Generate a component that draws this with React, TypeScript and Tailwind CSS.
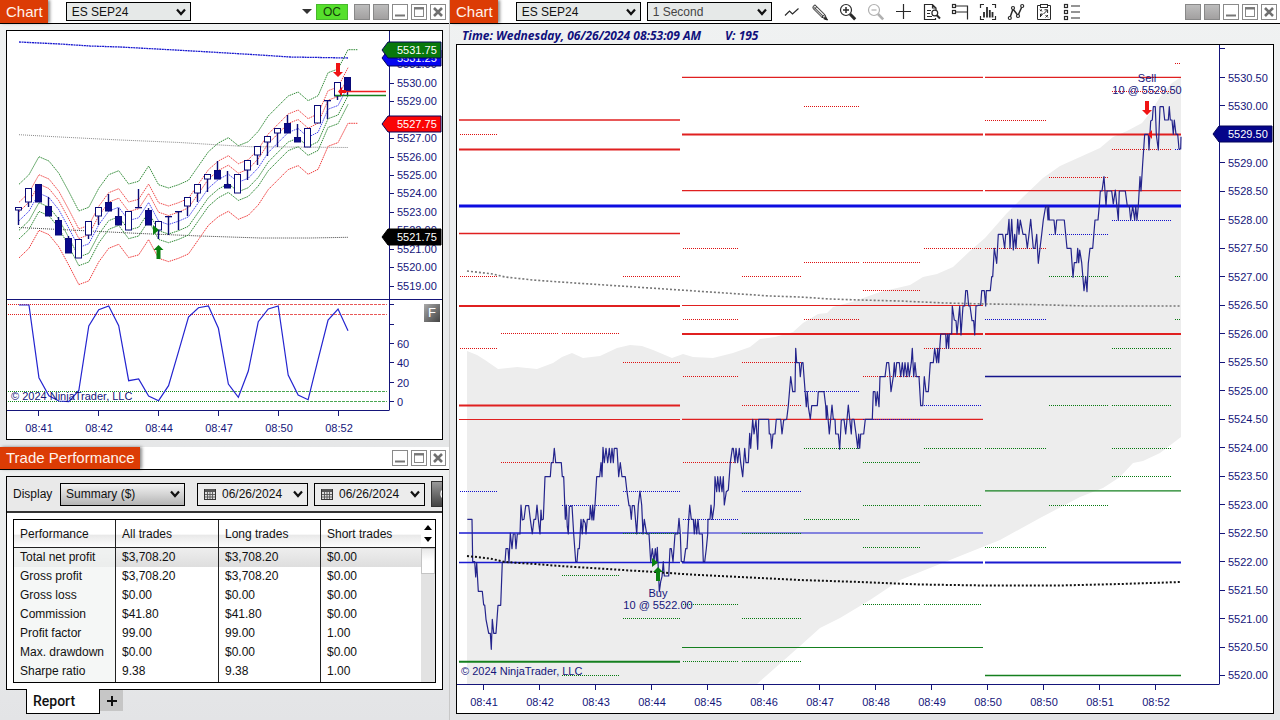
import React from "react";

const NAVY = "#15157a";
const RED = "#e02020";
const GREEN = "#15801f";
const BLUE = "#1a1ad0";

type Pair = [number, number];
const join = (p: Pair[]) => p.map((q) => q.join(",")).join(" ");

/* ---------- small parts ---------- */

function Chevron({ className = "" }: { className?: string }) {
  return (
    <svg viewBox="0 0 10 8" className={"pointer-events-none h-2 w-2.5 " + className} fill="none">
      <path d="M1 1.5 L5 6 L9 1.5" stroke="#111" strokeWidth="2.2" />
    </svg>
  );
}

function Picker({ label, id, value, dim, tone }: { label: string; id?: string; value: string; dim?: boolean; tone?: "metal" }) {
  return (
    <div className="relative flex w-[125px] shrink-0 items-center">
      <select
        id={id}
        aria-label={label}
        className={
          "w-full appearance-none rounded-none border border-black pl-[5px] text-[12px] leading-4 outline-none " +
          (tone === "metal" ? "h-[23px] bg-linear-to-b from-[#f2f2f2] via-[#d4d4d4] to-[#b4b4b4] " : "h-[19px] bg-[#e6e9e8] ") +
          (dim ? "text-[#444]" : "text-[#111]")
        }
      >
        <option>{value}</option>
      </select>
      <Chevron className="absolute right-[5px]" />
    </div>
  );
}

function DatePick({ label }: { label: string }) {
  return (
    <div className="relative flex w-[111px] shrink-0 items-center">
      <svg viewBox="0 0 12 12" className="pointer-events-none absolute left-[7px] h-3 w-3">
        <rect x="0.5" y="1.5" width="11" height="10" fill="#ddd" stroke="#333" />
        <rect x="1" y="1" width="10" height="3" fill="#555" />
        <path d="M1 6.5H11M1 9H11M3.5 4V11M6 4V11M8.5 4V11" stroke="#555" strokeWidth="0.9" />
      </svg>
      <select
        aria-label={label}
        className="h-[23px] w-full appearance-none rounded-none border border-black bg-[#ececec] pl-6 text-[12px] leading-4 text-[#111] outline-none"
      >
        <option>06/26/2024</option>
      </select>
      <Chevron className="absolute right-[5px]" />
    </div>
  );
}

function WindowButtons({ links }: { links?: boolean }) {
  const box = "h-4 w-4 border border-[#8a8a8a] bg-white";
  const metal = "h-4 w-4 border border-[#888] bg-linear-to-b from-[#bdbdbd] to-[#a2a0a0]";
  return (
    <div className="flex shrink-0 items-center gap-[3px] pr-[3px]">
      {links && <button aria-label="Link instrument" className={metal} />}
      {links && <button aria-label="Link interval" className={metal} />}
      <button aria-label="Minimize" className={box}>
        <svg viewBox="0 0 14 14" className="block h-3.5 w-3.5"><path d="M2 10.5H12" stroke="#777" strokeWidth="2" /></svg>
      </button>
      <button aria-label="Maximize" className={box}>
        <svg viewBox="0 0 14 14" className="block h-3.5 w-3.5" fill="none"><rect x="2.5" y="2.5" width="9" height="9" stroke="#888" /><path d="M2 3.5H12" stroke="#777" strokeWidth="2" /></svg>
      </button>
      <button aria-label="Close" className={box}>
        <svg viewBox="0 0 14 14" className="block h-3.5 w-3.5"><path d="M3 3L11 11M11 3L3 11" stroke="#707070" strokeWidth="2.6" /></svg>
      </button>
    </div>
  );
}

function TabTitle({ children }: { children: React.ReactNode }) {
  return (
    <h2 className="flex shrink-0 items-center self-stretch bg-[#dc3c05] pr-[5px] pl-1.5 text-[15px] leading-5 text-[#fff3ec] shadow-[2px_0_3px_rgba(0,0,0,0.45)]">
      {children}
    </h2>
  );
}

const tools: { name: string; art: React.ReactNode; faded?: boolean }[] = [
  { name: "Line", art: <path d="M2 12.5L6.5 8L9.5 11L15.5 5.5" /> },
  {
    name: "Draw",
    art: (
      <g>
        <path d="M2 3.5L4 1.8L13.8 11.5L16 16.5L10.8 14.2L2 5.5Z" fill="#ddd" strokeWidth="1" />
        <path d="M3.2 4.6L12 13.2M3.5 6L6 3.6M10.8 14.2L13.8 11.5" strokeWidth="0.9" />
        <path d="M14 14.3L16.6 17L13.4 15.9Z" fill="#222" />
      </g>
    ),
  },
  {
    name: "Zoom in",
    art: (
      <g>
        <circle cx="7" cy="7" r="5.5" />
        <path d="M4 7H10M7 4V10" strokeWidth="1.5" />
        <path d="M11 11L16.2 16.4" strokeWidth="3" />
      </g>
    ),
  },
  {
    name: "Zoom out",
    faded: true,
    art: (
      <g>
        <circle cx="7" cy="7" r="5.5" />
        <path d="M4.5 7H9.5" />
        <path d="M11 11L16.2 16.4" strokeWidth="2.6" />
      </g>
    ),
  },
  { name: "Crosshair", art: <path d="M8.5 1V16M1 8.5H16" strokeWidth="1.2" /> },
  {
    name: "Data box",
    art: (
      <g>
        <path d="M13 7V5L9.5 1.5H1.5V16.5H12.5V15M9.5 1.5V5H13M4 7.5H8M4 10.5H7M4 13.5H9" />
        <circle cx="11.8" cy="10" r="2.9" fill="#fff" />
        <path d="M13.8 12.2L17 15.5" strokeWidth="2" />
      </g>
    ),
  },
  {
    name: "Chart trader",
    art: (
      <g>
        <rect x="1.5" y="1.5" width="3" height="3" />
        <rect x="1.5" y="7.5" width="3" height="3" />
        <path d="M4.5 3H16.5V16.5M4.5 9H16.5" />
      </g>
    ),
  },
  {
    name: "Properties",
    art: (
      <g>
        <path d="M1.5 5V1.5H5M13 1.5H16.5V5M1.5 13V16.5H5M13 16.5H16.5V13" />
        <path d="M5 9V14.5M8 4V14.5M10.8 7V14.5M13.5 9V14.5" strokeWidth="1.8" />
      </g>
    ),
  },
  {
    name: "Indicators",
    art: (
      <g>
        <path d="M3 14.5L6 6L11 12.5L15 3.5" strokeWidth="1.5" />
        <circle cx="2.8" cy="15" r="1.5" fill="#fff" />
        <circle cx="6" cy="5" r="1.5" fill="#fff" />
        <circle cx="11" cy="13" r="1.5" fill="#fff" />
        <circle cx="15.2" cy="3" r="1.5" fill="#fff" />
      </g>
    ),
  },
  {
    name: "Strategies",
    art: (
      <g strokeWidth="1">
        <path d="M5 2.5H2.5V16.5H15.5V2.5H13" />
        <rect x="5.5" y="1.5" width="7" height="3" />
        <path d="M5 8L7 6.5M5 6.5L7 8.5M8.5 11L12.5 7M9.5 6.8H12.6V10M5.5 14V11H7.5L6 13M10.5 12L13 14.5M13 12L10.5 14.5" />
      </g>
    ),
  },
  {
    name: "List",
    art: (
      <g>
        <rect x="1.5" y="1.5" width="3" height="3" />
        <rect x="1.5" y="7.5" width="3" height="3" />
        <rect x="1.5" y="13.5" width="3" height="3" />
        <path d="M8 3H17M8 9H17M8 15H17" />
      </g>
    ),
  },
];

function Flag({ x, y, text, fill, edge = "#05055a" }: { x: number; y: number; text: string; fill: string; edge?: string }) {
  return (
    <g>
      <path d={`M${x} ${y} L${x + 6} ${y - 8} H${x + 59} V${y + 8} H${x + 6} Z`} fill={fill} stroke={edge} />
      <text x={x + 15} y={y + 4} fill="#fff">{text}</text>
    </g>
  );
}

const arrow = (x: number, tip: number, dir: 1 | -1) =>
  `M${x} ${tip} L${x - 5} ${tip - 5 * dir} H${x - 2} V${tip - 14 * dir} H${x + 2} V${tip - 5 * dir} H${x + 5} Z`;

/* ---------- left chart ---------- */

const barX = (i: number) => 19 + i * 9.97;
const envelope = [
  184.3, 174.7, 156.7, 161, 173.3, 191.7, 211, 207.3, 188.3, 174.7, 170.7, 184, 181.3, 166, 184.7, 188, 184.7, 180.3, 166,
  151.7, 143, 137.7, 145.7, 141.7, 131.3, 116, 106, 96, 92, 100.7, 95.7, 72.7, 69, 49.7,
];
const bands: { shift: number; color: string; extend?: boolean }[] = [
  { shift: 0, color: "#2f8a35", extend: true },
  { shift: 18, color: "#f04a4a" },
  { shift: 27.5, color: "#f04a4a" },
  { shift: 36.5, color: "#4a4af0" },
  { shift: 46, color: "#2f8a35" },
  { shift: 54.7, color: "#2f8a35" },
  { shift: 73.6, color: "#f03a3a", extend: true },
];
// [wick top, body top, body bottom, wick bottom, filled]
const candles: [number, number, number, number, 0 | 1][] = [
  [207, 207, 210, 225, 0], [188, 188, 202, 207, 0], [184, 184, 202, 202, 1], [197, 206, 216, 216, 1],
  [217, 220, 235, 235, 1], [236, 238, 253, 253, 1], [239, 239, 258, 258, 0], [221, 221, 235, 239, 0],
  [207, 207, 216, 225, 0], [194, 202, 211, 211, 1], [208, 216, 225, 225, 1], [211, 211, 230, 230, 0],
  [189, 207, 207, 207, 0], [208, 210, 225, 225, 1], [221, 221, 230, 239, 0], [216, 216, 216, 235, 0],
  [211, 211, 211, 230, 0], [197, 197, 206, 216, 0], [184, 184, 193, 202, 0], [174, 174, 179, 192, 0],
  [161, 170, 179, 179, 1], [171, 184, 188, 188, 1], [174, 174, 193, 193, 0], [160, 160, 170, 180, 0],
  [146, 146, 155, 165, 0], [136, 136, 142, 156, 0], [128, 128, 133, 147, 0], [115, 123, 133, 133, 1],
  [124, 137, 142, 142, 1], [128, 128, 147, 147, 0], [105, 105, 123, 123, 0], [100, 100, 100, 119, 0],
  [82, 82, 96, 100, 0], [77, 77, 91, 95, 1],
];
const stochastic = [
  305, 305, 377.7, 395.7, 401, 401.7, 390.5, 326, 309.7, 306, 325.7, 380.7, 379, 396, 400.7, 385.7, 351.7, 317, 307.7, 306,
  328.3, 384, 397.3, 371, 321.7, 309, 306, 375, 395, 399.7, 359.3, 320, 309, 330.7,
];

function TickChart() {
  return (
    <svg viewBox="7 31 435 408" className="block h-auto w-full" fontSize="11" role="img" aria-label="ES SEP24 range chart">
      <g fill="none">
        <polyline points="19,42 60,44 90,46 120,47 175,50 210,52 260,55 290,57 320,57.5 348,58" stroke={BLUE} strokeWidth="1.3" strokeDasharray="2 0.6" />
        <polyline points="19,134.7 60,137 120,140 180,142.5 220,145 250,146.7 348,147.5" stroke="#8a8a8a" strokeDasharray="1 1" />
        <polyline points="19,227.5 80,230.5 140,233.5 200,236 260,238 310,238 348,237.3" stroke="#444" strokeDasharray="1 1" />
        {bands.map((b) => (
          <polyline
            key={b.shift}
            points={
              join(envelope.map((v, i): Pair => [barX(i), v + b.shift])) + (b.extend ? ` 358,${envelope[33] + b.shift}` : "")
            }
            stroke={b.color}
            strokeDasharray="1.5 0.8"
          />
        ))}
      </g>
      <g stroke="#0a0a78">
        {candles.map(([wt, bt, bb, wb, filled], i) => {
          const x = Math.round(barX(i)) - 0.5;
          return (
            <g key={i}>
              <path d={`M${x} ${wt}V${bt}M${x} ${bb}V${wb}`} strokeWidth="1.4" />
              <rect x={x - 3} y={bt + 0.5} width="6" height={Math.max(bb - bt - 0.5, 0.3)} fill={filled ? "#0a0a8c" : "#fff"} />
            </g>
          );
        })}
      </g>
      <path d="M345 91.5H386" stroke="#f02020" strokeWidth="1.3" />
      <path d="M335 95.5H386" stroke={GREEN} strokeWidth="1.3" />
      <path d={arrow(338, 77, 1)} fill="#f01414" />
      <path d="M338 91.5L342 87V96Z M342 90H346V93H342Z" fill="#f01414" />
      <path d={arrow(158.5, 245, -1)} fill="#0a800f" />
      <path d="M159 230L153 225V235Z" fill="#0a800f" />

      <g fill="none">
        {[304.5, 314.5, 391.5, 401.5].map((y) => (
          <g key={y} stroke={y < 350 ? "#e02020" : "#0f8a1a"}>
            <path d={`M8 ${y}H218`} strokeDasharray="1 1" />
            <path d={`M218 ${y}H387`} strokeOpacity="0.75" strokeDasharray="3 1" />
          </g>
        ))}
        <polyline points={join(stochastic.map((v, i): Pair => [barX(i), v]))} stroke="#2424d0" strokeWidth="1.2" />
        <path d="M7 299.5H442M389.5 31V410.5M7 410.5H389" stroke={NAVY} />
        <path
          d={"M389 304.5h5M389 324.5h5" + [343.5, 362.5, 382.5, 401.5].map((y) => `M389 ${y}h5`).join("")}
          stroke={NAVY}
        />
      </g>
      <g fill={NAVY}>
        {[5531, 5530, 5529, 5527, 5526, 5525, 5524, 5523, 5522, 5521, 5520, 5519].map((p) => {
          const y = 82.7 + (5530 - p) * 18.45;
          return (
            <g key={p}>
              <path d={`M389 ${Math.round(y)}.5h5`} stroke={NAVY} />
              <text x="397" y={y + 4}>{p}.00</text>
            </g>
          );
        })}
        {[60, 40, 20, 0].map((v, i) => (
          <text key={v} x="397" y={348 + i * 19.3}>{v}</text>
        ))}
        {["08:41", "08:42", "08:44", "08:47", "08:50", "08:52"].map((t, i) => (
          <g key={t}>
            <path d={`M${38.5 + i * 60} 411v5`} stroke={NAVY} />
            <text x={39 + i * 60} y="432" textAnchor="middle">{t}</text>
          </g>
        ))}
        <text x="11" y="400">© 2024 NinjaTrader, LLC</text>
      </g>
      <Flag x={382} y={58} text="5531.25" fill="#0505f0" />
      <Flag x={382} y={50} text="5531.75" fill="#08780c" />
      <Flag x={382} y={124} text="5527.75" fill="#fa0505" />
      <Flag x={382} y={237} text="5521.75" fill="#000" edge="#000" />
    </svg>
  );
}

/* ---------- right chart ---------- */

const third = (ox: number, oy: number, src: string) =>
  src
    .split(" ")
    .map((s) => s.split(",").map(Number))
    .map(([x, y]) => `${(ox + x / 3).toFixed(1)},${(oy + y / 3).toFixed(1)}`)
    .join(" ");

const priceLine = [
  third(450, 430, "52,268 66,268 68,395 74,395 77,441 80,398 85,484 97,484 101,525 104,525 108,568 116,610 121,610 124,658 127,568 131,610 138,610 144,526 152,526 157,397 165,397 168,356 174,356 177,398 181,309 186,356 190,312 195,312 198,356 202,312 210,312 213,225 217,270 222,268 227,227 236,227 241,268 247,312 252,268 257,268 261,225 265,268 270,312 273,240 275,270 280,268 285,140 301,140 304,98 309,98 313,55 317,98 334,98 337,140 341,140 346,268 349,225 352,290 355,312 358,230 366,227 371,312 377,395 381,395 384,356 388,356 393,268 397,312 400,268 406,280 408,312 412,268 419,268 421,227 426,270 428,225 431,270 435,225 440,140 449,140 453,98 456,140 459,52 463,98 468,55 473,98 478,55 482,98 486,55 490,98 493,55 501,55 506,140 511,98 516,140 526,140 531,185 537,227 540,227 544,268 547,227 553,227 560,312 565,225 570,183 575,225 579,312 583,268 590,312 597,312 602,395 607,356 612,395 616,356 620,398 622,352 626,440 628,485 632,455 636,440 640,395 643,438 656,438 660,356 664,356 669,395 675,312 683,312 687,265 691,312 694,395 702,395 707,356 711,356 716,268 719,225 724,268 730,268 733,312 736,268 740,312 744,268 748,312 757,312 760,395 764,395 769,356 773,312 774,268 780,268 783,225 787,268 793,225 795,140 800,185 803,140 808,185 811,140 816,185 820,140 823,225 829,185 835,180 841,98 847,55 850,55 855,98 858,55 863,98 868,55 872,98 878,140 884,55 888,98 895,98 899,10"),
  third(680, 330, "212,355 215,310 218,268 222,312 228,270 233,358 236,268 266,268 268,312 272,312 275,355 279,312 285,312 289,268 302,268 306,312 311,270 320,268 325,227 332,140 338,185 345,185 347,55 350,98 358,98 361,140 365,98 369,98 372,140 379,230 382,185 385,230 391,268 395,227 412,227 415,185 432,185 437,227 439,268 441,227 448,312 456,225 460,268 465,268 467,312 475,312 479,358 484,270 492,268 497,312 505,225 509,268 514,312 516,268 522,268 528,312 533,355 536,312 539,355 542,312 551,312 556,268 577,268 580,185 585,185 588,227 592,185 597,230 600,140 615,140 620,98 626,98 630,140 633,185 640,140 643,98 646,140 650,98 658,98 662,140 667,98 671,140 675,98 680,140 684,98 688,140 694,98 697,55 701,140 705,98 709,140 717,140 722,227 728,227 733,140 738,185 745,185 751,98 760,98 764,55 770,98 773,55 776,98 782,12 797,12 799,55 803,12 806,55"),
  third(860, 250, "268,252 275,252 277,168 283,210 288,212 291,252 295,212 299,168 303,255 309,168 314,168 317,122 322,122 326,168 330,168 336,212 341,212 344,255 348,168 362,165 365,122 373,122 377,168 379,122 391,122 395,80 398,80"),
  third(860, 0, "403,745 410,790 415,703 428,703 434,745 437,703 443,703 447,658 450,745 455,658 460,750 464,703 468,745 473,658 477,703 481,660 489,703 497,703 502,745 507,703 512,658 520,745 525,745 530,703 535,790 540,745 545,703 550,660 557,618 561,618 564,660 566,618 568,660 582,660 586,703 590,660 613,660 621,745 633,745 636,790 639,832 643,788 650,788 653,745 656,788 659,750 665,788 672,872 677,830 681,875 685,790 690,745 698,745 705,660 714,660 718,618 721,573 726,573 732,530 738,618 741,573 755,573 760,612 766,570 770,612 775,660 778,573 796,573 802,618 808,618 812,660 818,618 824,660 827,618 831,660 835,618 840,530 843,573 848,490 854,403 865,403 867,450 872,363 877,360 880,320 886,320 889,403 895,450 900,320 910,320 914,360 925,360 928,320 931,360 936,360 940,403 943,360 948,403 953,403 957,447 962,447 963,410"),
].join(" ");

const cloud =
  "467,351 477,355 485,360 498,369 517,367 537,369 553,363 562,357 572,353 583,358 600,356 617,348 630,345 642,346 653,350 672,358 683,354 693,357 713,358 733,353 750,347 760,339 775,337 793,332 803,323 818,314 827,313 833,307 855,301 880,292 910,285 923,277 937,274 953,267 970,251 985,238 1007,213 1023,197 1043,178 1060,166 1080,157 1100,148 1113,137 1127,131 1142,123 1150,113 1160,97 1172,83 1181,77 " +
  "1181,437 1160,453 1143,461 1133,463 1120,477 1103,488 1080,497 1040,518 1000,540 980,548 940,564 900,580 870,600 840,618 820,628 800,646 757,684 467,684";

const spans: Pair[] = [[459, 680], [682, 983], [985, 1181]];
// [span, y, color, width]
const levels: [number, number, string, number][] = [
  [0, 120, RED, 1.3], [0, 149.5, RED, 2], [0, 233.5, RED, 1.3], [0, 306, RED, 2], [0, 405.5, RED, 2],
  [0, 419.5, RED, 1.2], [0, 533, BLUE, 1.4], [0, 562.5, BLUE, 1.7], [0, 661.8, GREEN, 2],
  [1, 77.3, RED, 1.3], [1, 134.5, RED, 2], [1, 190.7, RED, 1.3], [1, 305.5, RED, 1.2], [1, 334, RED, 2],
  [1, 419.3, RED, 1.2], [1, 533, BLUE, 1.2], [1, 562.5, BLUE, 2], [1, 647.5, GREEN, 1.2],
  [2, 77.3, RED, 1.3], [2, 134.5, RED, 2], [2, 190.7, RED, 1.2], [2, 334, RED, 2], [2, 376.5, "#15158c", 1.3],
  [2, 490.8, GREEN, 1.3], [2, 562.5, BLUE, 2], [2, 675.5, GREEN, 1.3],
];
const dashes: { x: Pair; red: number[]; blue: number[]; green: number[] }[] = [
  { x: [460, 497], red: [134, 276, 348], blue: [491], green: [] },
  { x: [501, 558], red: [333, 462], blue: [], green: [] },
  { x: [562, 619], red: [333], blue: [505], green: [575, 675] },
  { x: [623, 680], red: [276, 362], blue: [491], green: [533, 618] },
  { x: [683, 738], red: [248, 319, 376, 462], blue: [519], green: [604, 661] },
  { x: [742, 801], red: [276, 362, 405], blue: [491], green: [533, 618, 661] },
  { x: [804, 860], red: [106, 262, 319], blue: [391], green: [448, 519] },
  { x: [863, 921], red: [262, 290, 376], blue: [419], green: [462, 505, 547, 604] },
  { x: [924, 982], red: [248, 348], blue: [405], green: [448, 505, 604] },
  { x: [985, 1047], red: [120, 248], blue: [319], green: [448, 547] },
  { x: [1049, 1108], red: [177], blue: [234], green: [276, 405, 505] },
  { x: [1112, 1171], red: [91, 149], blue: [220], green: [348, 405, 448, 476] },
  { x: [1175, 1181], red: [63], blue: [149], green: [276, 319] },
];
const times = ["08:41", "08:42", "08:43", "08:44", "08:45", "08:46", "08:47", "08:48", "08:49", "08:50", "08:50", "08:51", "08:52"];

function SecondChart() {
  return (
    <svg viewBox="457 45 816 668" className="block h-full w-full" fontSize="11" role="img" aria-label="ES SEP24 one second chart">
      <polygon points={cloud} fill="#ededed" />
      <g fill="none">
        {levels.map(([s, y, c, w], i) => (
          <path key={i} d={`M${spans[s][0]} ${y}H${spans[s][1]}`} stroke={c} strokeWidth={w} />
        ))}
        <path d="M459 206H1181" stroke="#0d0de0" strokeWidth="3" />
        {dashes.map((d, i) => (
          <g key={i} strokeDasharray="1 1">
            {d.red.map((y) => <path key={y} d={`M${d.x[0]} ${y}.5H${d.x[1]}`} stroke="#dd1111" />)}
            {d.blue.map((y) => <path key={y} d={`M${d.x[0]} ${y}.5H${d.x[1]}`} stroke="#1111cc" />)}
            {d.green.map((y) => <path key={y} d={`M${d.x[0]} ${y}.5H${d.x[1]}`} stroke="#067a10" />)}
          </g>
        ))}
        <polyline points={priceLine} stroke="#24248c" strokeWidth="1.2" strokeLinejoin="round" />
        <polyline
          points="467,271 493,274 505,277 533,280 560,282 590,284 620,286 650,288 680,290 710,292 740,294 770,296 800,297 830,299 860,300 900,301 945,303 985,304 1030,304.5 1087,306 1181,306"
          stroke="#777" strokeWidth="1.6" strokeDasharray="2 2"
        />
        <polyline
          points="467,556 490,558.5 505,562 535,564 560,566 600,568.5 630,570.5 655,572 690,574.5 730,576.5 750,577.5 800,580 860,582 920,584.5 985,585.5 1060,585.5 1120,584 1181,582"
          stroke="#111" strokeWidth="2" strokeDasharray="2 2"
        />
      </g>
      <path d={arrow(1147, 115, 1)} fill="#f01414" />
      <path d="M1148 134.5L1152 130V139Z" fill="#f01414" />
      <path d={arrow(658, 567, -1)} fill="#0a800f" />
      <path d="M658 562.5L652 558V567Z" fill="#0a800f" />

      <g fill={NAVY} textAnchor="middle">
        <text x="1147" y="82">Sell</text>
        <text x="1147" y="94">10 @ 5529.50</text>
        <text x="658" y="597">Buy</text>
        <text x="658" y="609">10 @ 5522.00</text>
        {times.map((t, i) => (
          <g key={i}>
            <path d={`M${483.5 + i * 56} 685v5`} stroke={NAVY} />
            <text x={484 + i * 56} y="706">{t}</text>
          </g>
        ))}
      </g>
      <path d="M1219.5 45V684.5M457 684.5H1219M1220 48.5h5" stroke={NAVY} fill="none" />
      <g fill={NAVY}>
        {Array.from({ length: 22 }, (_, i) => {
          const y = 77.5 + i * 28.475;
          return i === 2 ? null : (
            <g key={i}>
              <path d={`M1220 ${Math.floor(y)}.5h5`} stroke={NAVY} />
              <text x="1228" y={y + 4}>{(5530.5 - i * 0.5).toFixed(2)}</text>
            </g>
          );
        })}
        <text x="461" y="675">© 2024 NinjaTrader, LLC</text>
      </g>
      <Flag x={1213} y={134} text="5529.50" fill="#05058a" />
    </svg>
  );
}

/* ---------- performance table ---------- */

const rows = [
  ["Total net profit", "$3,708.20", "$3,708.20", "$0.00"],
  ["Gross profit", "$3,708.20", "$3,708.20", "$0.00"],
  ["Gross loss", "$0.00", "$0.00", "$0.00"],
  ["Commission", "$41.80", "$41.80", "$0.00"],
  ["Profit factor", "99.00", "99.00", "1.00"],
  ["Max. drawdown", "$0.00", "$0.00", "$0.00"],
  ["Sharpe ratio", "9.38", "9.38", "1.00"],
];

function Performance() {
  return (
    <div className="flex border border-black bg-white text-[12px] leading-4 text-[#111]">
      <table className="min-w-0 flex-1 table-fixed border-separate border-spacing-0 text-left">
        <colgroup>
          <col className="w-[102px]" />
          <col className="w-[103px]" />
          <col className="w-[102px]" />
          <col />
        </colgroup>
        <thead>
          <tr className="h-7 bg-linear-to-b from-white from-50% via-[#e9e9e9] via-55% to-white">
            {["Performance", "All trades", "Long trades", "Short trades"].map((h) => (
              <th key={h} scope="col" className="border-r border-b border-[#222] p-0 pl-1.5 font-normal last:border-r-0">{h}</th>
            ))}
          </tr>
        </thead>
        <tbody>
          {rows.map((r) => (
            <tr key={r[0]} className="h-[19px] first:bg-linear-to-b first:from-[#eeeeee] first:to-[#dedede] last:h-5">
              <th scope="row" className="border-r border-[#222] bg-[#f1f3f2]/70 p-0 pb-0.5 pl-1.5 font-normal whitespace-nowrap">{r[0]}</th>
              <td className="border-r border-[#222] p-0 pb-0.5 pl-1.5">{r[1]}</td>
              <td className="border-r border-[#222] p-0 pb-0.5 pl-1.5">{r[2]}</td>
              <td className="p-0 pb-0.5 pl-1.5">{r[3]}</td>
            </tr>
          ))}
        </tbody>
      </table>
      <div className="flex w-3.5 shrink-0 flex-col bg-[#e2e2e2]">
        <div className="flex h-7 flex-col items-center justify-around border-b border-[#222] bg-white py-0.5">
          <button aria-label="Scroll up"><svg viewBox="0 0 8 5" className="block h-[5px] w-2"><path d="M0 5L4 0L8 5Z" /></svg></button>
          <button aria-label="Scroll down"><svg viewBox="0 0 8 5" className="block h-[5px] w-2"><path d="M0 0L4 5L8 0Z" /></svg></button>
        </div>
        <div className="h-[26px] border border-[#c4c4c4] bg-linear-to-b from-[#e8e8e8] via-white to-white" />
      </div>
    </div>
  );
}

/* ---------- page ---------- */

export default function App() {
  return (
    <main className="grid min-h-screen grid-cols-[450px_minmax(0,1fr)] bg-[#e6e7e8] font-['Liberation_Sans',Arial,sans-serif] text-[#111]">
      <div className="flex flex-col border-r border-[#c8c8c8]">
        <section className="bg-linear-to-b from-[#f0f2f2] to-[#e6e7e8] pb-[7px]">
          <header className="flex h-6 items-center border-b border-black bg-white">
            <TabTitle>Chart</TabTitle>
            <div className="flex flex-1 items-center pl-[18px]">
              <Picker label="Instrument" value="ES SEP24" />
            </div>
            <svg viewBox="0 0 10 5" className="mr-1 h-[5px] w-2.5"><path d="M0 0H10L5 5Z" fill="#333" /></svg>
            <button className="mr-1.5 h-4 w-8 border border-[#48b82c] bg-[#56e02c] text-[12px] leading-[14px] text-[#143c0a]">OC</button>
            <WindowButtons links />
          </header>
          <div className="mx-1.5 mt-1.5 border border-black bg-white">
            <div className="relative">
              <TickChart />
              <button className="absolute top-[67%] right-0.5 h-[18px] w-4 bg-linear-to-br from-[#aaa] to-[#444] text-[13px] leading-[18px] text-white">F</button>
            </div>
          </div>
        </section>

        <section className="flex flex-1 flex-col bg-linear-to-b from-[#f0f2f2] to-[#e3e4e6]">
          <header className="flex h-[23px] items-center justify-between border-b border-black bg-white">
            <TabTitle>Trade Performance</TabTitle>
            <WindowButtons />
          </header>
          <div className="mx-1.5 mt-1.5 border border-black bg-white">
            <div className="flex h-9 items-center overflow-hidden border-b-2 border-[#333] bg-[#e9e9e9] pl-1.5 text-[12px] leading-4">
              <label htmlFor="display-mode" className="w-[47px] shrink-0">Display</label>
              <Picker id="display-mode" label="Display" value="Summary ($)" tone="metal" />
              <div className="flex min-w-0 flex-1 gap-1.5 pl-3">
                <DatePick label="From date" />
                <DatePick label="To date" />
                <button aria-label="Generate" className="h-[26px] min-w-0 flex-1 border border-r-0 border-[#333] bg-linear-to-b from-[#999] to-[#444]">
                  <svg viewBox="0 0 11 24" className="block h-6 w-[11px]" fill="none"><path d="M12 7.5Q9 8.5 9 12T12 16.5" stroke="#fff" strokeWidth="1.4" /></svg>
                </button>
              </div>
            </div>
            <div className="p-1.5">
              <Performance />
            </div>
          </div>
          <div className="flex items-start pl-[26px]">
            <button className="-mt-px h-[25px] w-[74px] border border-t-0 border-black bg-white pl-1.5 text-left font-['Roboto',sans-serif] text-[14px] leading-5 font-medium">Report</button>
            <button aria-label="Add tab" className="flex h-[21px] w-[23px] items-center justify-center bg-[#c6c6c6]">
              <svg viewBox="0 0 12 12" className="h-3 w-3"><path d="M6 1V11M1 6H11" stroke="#111" strokeWidth="2" /></svg>
            </button>
          </div>
        </section>
      </div>

      <section className="flex min-w-0 flex-col bg-linear-to-b from-[#f0f2f2] to-[#e3e4e6] pb-1.5">
        <header className="flex h-6 shrink-0 items-center border-b border-black bg-white">
          <TabTitle>Chart</TabTitle>
          <div className="flex items-center gap-1.5 pl-[18px]">
            <Picker label="Instrument" value="ES SEP24" />
            <Picker label="Interval" value="1 Second" dim />
          </div>
          <div className="flex flex-1 pl-1.5">
            {tools.map((t) => (
              <button key={t.name} aria-label={t.name} className="flex w-7 items-center justify-center">
                <svg viewBox="0 0 18 18" className="h-[18px] w-[18px]" fill="none" stroke={t.faded ? "#b0b0b0" : "#2a2a2a"} strokeWidth="1.2">
                  {t.art}
                </svg>
              </button>
            ))}
          </div>
          <WindowButtons links />
        </header>
        <p className="flex h-5 shrink-0 items-end gap-6 pl-3 font-['Open_Sans',sans-serif] text-[12px] leading-4 font-bold text-[#10107c] italic">
          <span>Time: Wednesday, 06/26/2024 08:53:09 AM</span>
          <span>V: 195</span>
        </p>
        <div className="mx-1.5 min-h-0 flex-1 border border-black bg-white">
          <SecondChart />
        </div>
      </section>
    </main>
  );
}
